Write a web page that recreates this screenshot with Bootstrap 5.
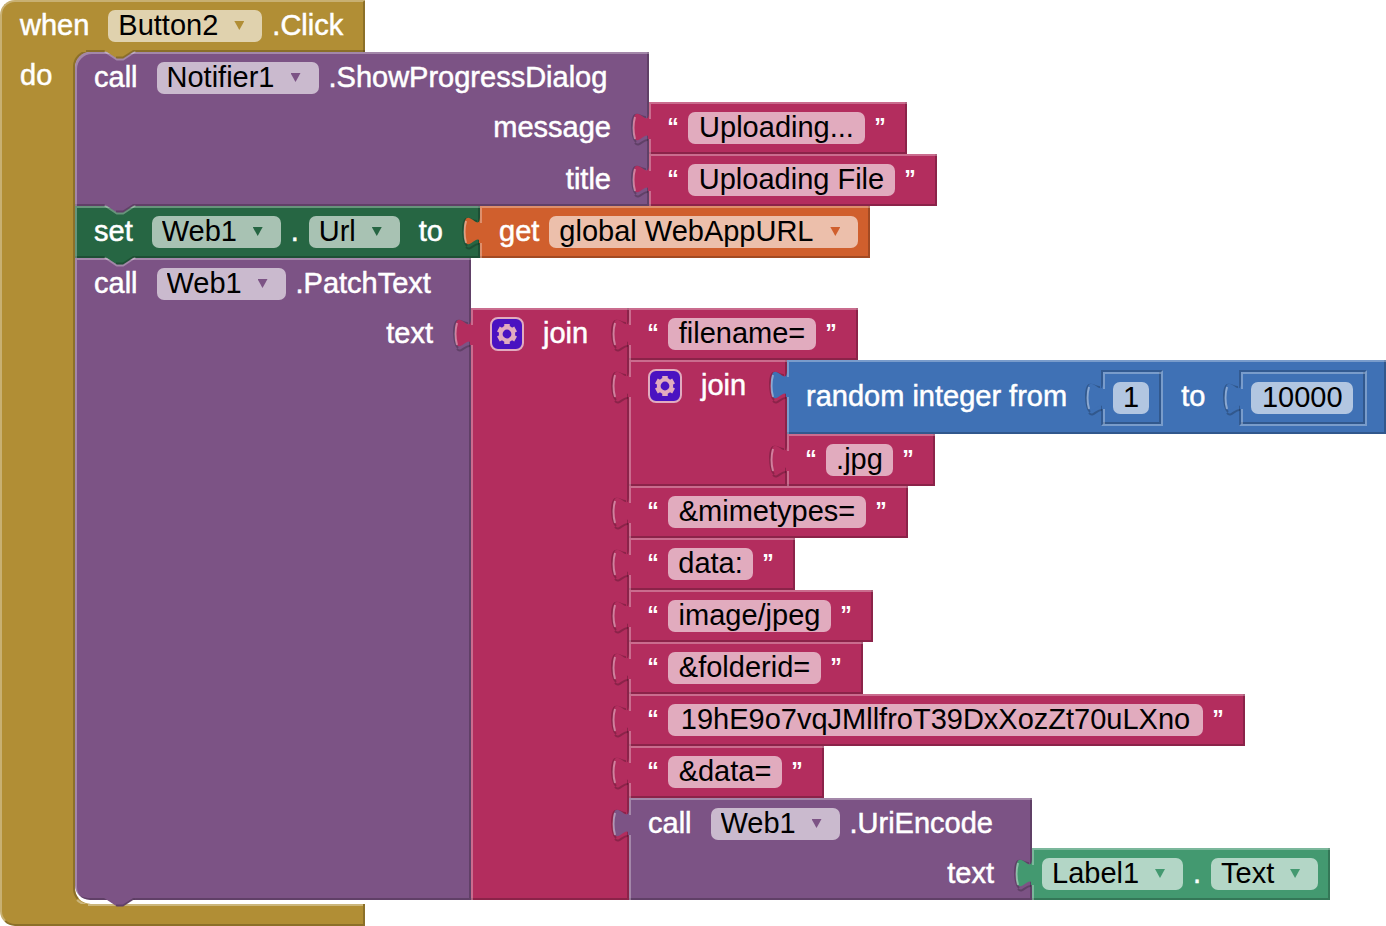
<!DOCTYPE html>
<html lang="en">
<head>
<meta charset="utf-8">
<meta name="viewport" content="width=device-width, initial-scale=1">
<title>Button2.Click blocks</title>
<link href="https://cdn.jsdelivr.net/npm/bootstrap@5.3.0/dist/css/bootstrap.min.css" rel="stylesheet">
<style>
:root { --lit: rgba(255,255,255,.3); --shade: rgba(0,0,0,.22); }
body { font-family: "Liberation Sans", Arial, sans-serif; font-size: 29px; line-height: 30px; color: #fff; background: #fff; white-space: nowrap; }

/* block colours */
.c-control { --c: #b18e35; }
.c-call { --c: #7c5385; }
.c-text { --c: #b32d5e; }
.c-set { --c: #266643; }
.c-var { --c: #d05f2d; }
.c-math { --c: #3f71b5; }
.c-get { --c: #439970; }

.blk { position: relative; background: var(--c); box-shadow: inset 2px 2px var(--lit), inset -2px -2px var(--shade); flex: none; }
.line { display: flex; align-items: flex-start; height: 52px; padding: 10px 20px 0 19px; }
.line-first { height: 50px; }
.line-end { justify-content: flex-end; padding-right: 38px; }
.g1 { gap: 10px; }
.far { margin-right: 9px; }
.far-left { margin-left: 9px; }
.caption { -webkit-text-stroke: 0.5px #fff; height: 32px; }

/* fields */
.field { border: 0; border-radius: 7px; background: rgba(255,255,255,.6); color: #000; height: 32px; padding: 0 0 2px; font: inherit; line-height: 30px; text-align: center; min-width: 0; }
.pick { position: relative; display: block; height: 32px; border-radius: 7px; background: rgba(255,255,255,.6); }
.pick select { appearance: none; display: block; border: 0; background: none; color: #000; font: inherit; line-height: 34px; height: 34px; margin-top: -2px; padding: 0 44px 0 10px; }
.pick::after { content: ""; position: absolute; right: 18px; top: 11px; width: 10px; height: 9px; background: var(--c); clip-path: polygon(0 0, 100% 0, 50% 100%); pointer-events: none; }
.snug select { padding-right: 43px; }
.quo { font-size: 23px; font-weight: 700; width: 10px; display: flex; justify-content: center; }
.quoted { width: fit-content; padding-right: 22px; }
.gear { border: 0; padding: 0; background: none; width: 34px; height: 34px; margin-top: -1px; display: block; }
.gear svg, .tab, .notch { display: block; }

/* connectors that overlap the neighbouring block */
.tab { position: absolute; left: -18px; top: 0; }
.notch { position: absolute; left: 28px; bottom: -10px; z-index: 2; }
.hat .notch { left: 101px; }

/* event block */
.hat { width: 365px; height: 52px; background: var(--c); border: 2px solid #c8b072; border-bottom: 0; border-right-color: #8c7029; border-radius: 15px 0 0 0; padding: 8px 18px 0; display: flex; position: relative; }
.hat::after { content: ""; position: absolute; left: 84px; right: -2px; bottom: 0; height: 2px; background: var(--shade); }
.rail { width: 75px; background: var(--c); border-left: 2px solid #c8b072; border-right: 2px solid #8c7029; padding: 8px 18px 0; flex: none; }
.foot { width: 365px; height: 22px; background: var(--c); border: 2px solid #c8b072; border-top: 0; border-right-color: #8c7029; border-bottom-color: #8c7029; border-radius: 0 0 0 15px; position: relative; }
.foot::after { content: ""; position: absolute; left: 86px; right: 0; top: 0; height: 2px; background: #cbb67c; }
.stack { position: relative; padding-bottom: 4px; }
.nook { position: absolute; left: -2px; }
.nook-top { top: 0; }
.nook-bottom { bottom: 0; }
.round-top { border-radius: 15px 0 0 0; }
.round-bottom { border-radius: 0 0 0 15px; }

.w-notify { min-width: 574px; }
.w-set { min-width: 405px; }
.w-patch { min-width: 396px; }
.w-join { min-width: 158px; }
.w-uri { min-width: 403px; }
.drop { margin-top: 50px; }
.math { display: flex; height: 74px; padding: 10px 19px 0; }
.math > .caption { margin-top: 11px; }
.socket { border: 2px solid; border-color: #325a91 #799cca #799cca #325a91; margin: 0 18px 0 34px; height: 56px; }
.socket:last-child { margin-right: 0; }
.socket .line { padding: 10px 12px 0 10px; }
.getter { padding: 10px 12px 0 10px; }

#message { width: 177px; } #title { width: 207px; } #part1 { width: 148px; } #ext { width: 67px; }
#part3 { width: 198px; } #part4 { width: 85px; } #part5 { width: 163px; } #part6 { width: 153px; }
#part7 { width: 535px; } #part8 { width: 114px; } #low { width: 36px; } #high { width: 102px; }
#var { width: 309px; }
</style>
</head>
<body>
<svg width="0" height="0" class="position-absolute" aria-hidden="true">
  <symbol id="s-tab" viewBox="0 0 20 46">
    <path d="M15 15c-5 1-13-10-14 8 0 10 1 14 4 17" fill="none" stroke="rgba(0,0,0,.22)" stroke-width="2"/>
    <path d="M18 10c0 20-16-16-16 15s16-5 16 15z" fill="var(--c)"/>
    <path d="M17 17h3v20h-3z" fill="var(--c)"/>
    <path d="M4 37q-3-11 0-22" fill="none" stroke="#fff" stroke-opacity=".4" stroke-width="2"/>
    <path d="M4 41c4 5 8-4 13-3" fill="none" stroke="#000" stroke-opacity=".22" stroke-width="2"/>
  </symbol>
  <symbol id="s-notch-fill" viewBox="0 0 34 12">
    <path d="M1 0L14 8.500h6L33 0z" fill="var(--c)"/>
    <path d="M13 7.500h7L32 0" fill="none" stroke="#000" stroke-opacity=".22" stroke-width="2"/>
  </symbol>
  <symbol id="s-notch" viewBox="0 0 34 12">
    <path d="M2 1L14 9h6L32 1" fill="none" stroke="#fff" stroke-opacity=".3" stroke-width="3"/>
    <use href="#s-notch-fill" width="34" height="12"/>
  </symbol>
  <symbol id="s-gear" viewBox="0 0 34 34">
    <rect x="1" y="1" width="32" height="32" rx="7" fill="#4a12c1" stroke="#e1abbf" stroke-width="2"/>
    <g fill="none" stroke="#e1abbf">
      <circle cx="17" cy="17" r="6.300" stroke-width="3.800"/>
      <path d="M17 10V7M17 24v3M23 13.500l2.600-1.500M11 20.500L8.400 22M11 13.500L8.400 12M23 20.500l2.600 1.500" stroke-width="5.500"/>
    </g>
  </symbol>
</svg>

<main class="c-control">
  <div class="hat g1">
    <span class="caption far">when</span>
    <label class="pick"><select aria-label="Component"><option>Button2</option></select></label>
    <span class="caption">.Click</span>
    <svg class="notch" width="34" height="12"><use href="#s-notch"/></svg>
  </div>
  <div class="d-flex">
    <div class="rail"><span class="caption">do</span></div>
    <div class="stack">
      <svg class="nook nook-top" width="18" height="16"><path d="M0 0H18A16 16 0 0 0 2 16H0z" fill="var(--c)"/><path d="M1 16A16 16 0 0 1 17 -1" fill="none" stroke="#8c7029" stroke-width="2"/></svg>
      <svg class="nook nook-bottom" width="18" height="18"><path d="M0 0H2A16 16 0 0 0 18 18H0z" fill="var(--c)"/><path d="M1 0v2A16 16 0 0 0 5 13" fill="none" stroke="#8c7029" stroke-width="2"/><path d="M4 14Q9 19 18 19" fill="none" stroke="#cbb67c" stroke-width="2"/></svg>

      <section class="d-flex">
        <div class="blk c-call w-notify round-top">
          <div class="line line-first g1">
            <span class="caption far">call</span>
            <label class="pick"><select aria-label="Notifier"><option>Notifier1</option></select></label>
            <span class="caption">.ShowProgressDialog</span>
          </div>
          <div class="line line-end"><label class="caption" for="message">message</label></div>
          <div class="line line-end"><label class="caption" for="title">title</label></div>
          <svg class="notch" width="34" height="12"><use href="#s-notch"/></svg>
        </div>
        <div class="drop">
          <div class="blk c-text line g1 quoted"><svg class="tab" width="20" height="46"><use href="#s-tab"/></svg><span class="quo">“</span><input class="field" id="message" value="Uploading..."><span class="quo">”</span></div>
          <div class="blk c-text line g1 quoted"><svg class="tab" width="20" height="46"><use href="#s-tab"/></svg><span class="quo">“</span><input class="field" id="title" value="Uploading File"><span class="quo">”</span></div>
        </div>
      </section>

      <section class="d-flex">
        <div class="blk c-set w-set line g1">
          <span class="caption far">set</span>
          <label class="pick snug"><select aria-label="Component"><option>Web1</option></select></label>
          <span class="caption">.</span>
          <label class="pick snug"><select aria-label="Property"><option>Url</option></select></label>
          <span class="caption far-left">to</span>
          <svg class="notch" width="34" height="12"><use href="#s-notch"/></svg>
        </div>
        <div class="blk c-var line g1 pe-2"><svg class="tab" width="20" height="46"><use href="#s-tab"/></svg>
          <label class="caption" for="var">get</label>
          <span class="pick me-1"><select id="var"><option>global WebAppURL</option></select></span>
        </div>
      </section>

      <section class="d-flex">
        <div class="blk c-call w-patch round-bottom">
          <div class="line line-first g1">
            <span class="caption far">call</span>
            <label class="pick snug"><select aria-label="Web component"><option>Web1</option></select></label>
            <span class="caption">.PatchText</span>
          </div>
          <div class="line line-end"><span class="caption">text</span></div>
          <svg class="notch" width="34" height="12"><use href="#s-notch-fill"/></svg>
        </div>
        <div class="drop d-flex">
          <div class="blk c-text w-join"><svg class="tab" width="20" height="46"><use href="#s-tab"/></svg>
            <div class="line g1"><button class="gear far" type="button" aria-label="Edit join"><svg width="34" height="34"><use href="#s-gear"/></svg></button><span class="caption">join</span></div>
          </div>
          <div>
            <div class="blk c-text line g1 quoted"><svg class="tab" width="20" height="46"><use href="#s-tab"/></svg><span class="quo">“</span><input class="field" id="part1" aria-label="Text" value="filename="><span class="quo">”</span></div>
            <div class="d-flex">
              <div class="blk c-text w-join"><svg class="tab" width="20" height="46"><use href="#s-tab"/></svg>
                <div class="line g1"><button class="gear far" type="button" aria-label="Edit join"><svg width="34" height="34"><use href="#s-gear"/></svg></button><span class="caption">join</span></div>
              </div>
              <div>
                <div class="blk c-math math"><svg class="tab" width="20" height="46"><use href="#s-tab"/></svg>
                  <label class="caption" for="low">random integer from</label>
                  <div class="socket"><div class="blk line"><svg class="tab" width="20" height="46"><use href="#s-tab"/></svg><input class="field" id="low" value="1"></div></div>
                  <label class="caption" for="high">to</label>
                  <div class="socket"><div class="blk line"><svg class="tab" width="20" height="46"><use href="#s-tab"/></svg><input class="field" id="high" value="10000"></div></div>
                </div>
                <div class="blk c-text line g1 quoted"><svg class="tab" width="20" height="46"><use href="#s-tab"/></svg><span class="quo">“</span><input class="field" id="ext" aria-label="Text" value=".jpg"><span class="quo">”</span></div>
              </div>
            </div>
            <div class="blk c-text line g1 quoted"><svg class="tab" width="20" height="46"><use href="#s-tab"/></svg><span class="quo">“</span><input class="field" id="part3" aria-label="Text" value="&amp;mimetypes="><span class="quo">”</span></div>
            <div class="blk c-text line g1 quoted"><svg class="tab" width="20" height="46"><use href="#s-tab"/></svg><span class="quo">“</span><input class="field" id="part4" aria-label="Text" value="data:"><span class="quo">”</span></div>
            <div class="blk c-text line g1 quoted"><svg class="tab" width="20" height="46"><use href="#s-tab"/></svg><span class="quo">“</span><input class="field" id="part5" aria-label="Text" value="image/jpeg"><span class="quo">”</span></div>
            <div class="blk c-text line g1 quoted"><svg class="tab" width="20" height="46"><use href="#s-tab"/></svg><span class="quo">“</span><input class="field" id="part6" aria-label="Text" value="&amp;folderid="><span class="quo">”</span></div>
            <div class="blk c-text line g1 quoted"><svg class="tab" width="20" height="46"><use href="#s-tab"/></svg><span class="quo">“</span><input class="field" id="part7" aria-label="Text" value="19hE9o7vqJMllfroT39DxXozZt70uLXno"><span class="quo">”</span></div>
            <div class="blk c-text line g1 quoted"><svg class="tab" width="20" height="46"><use href="#s-tab"/></svg><span class="quo">“</span><input class="field" id="part8" aria-label="Text" value="&amp;data="><span class="quo">”</span></div>
            <div class="d-flex">
              <div class="blk c-call w-uri"><svg class="tab" width="20" height="46"><use href="#s-tab"/></svg>
                <div class="line line-first g1">
                  <span class="caption far">call</span>
                  <label class="pick snug"><select aria-label="Web component"><option>Web1</option></select></label>
                  <span class="caption">.UriEncode</span>
                </div>
                <div class="line line-end"><span class="caption">text</span></div>
              </div>
              <div class="drop">
                <div class="blk c-get line g1 getter"><svg class="tab" width="20" height="46"><use href="#s-tab"/></svg>
                  <label class="pick snug"><select aria-label="Label component"><option>Label1</option></select></label>
                  <span class="caption">.</span>
                  <label class="pick snug"><select aria-label="Property"><option>Text</option></select></label>
                </div>
              </div>
            </div>
          </div>
        </div>
      </section>
    </div>
  </div>
  <div class="foot"></div>
</main>
<script src="https://cdn.jsdelivr.net/npm/bootstrap@5.3.0/dist/js/bootstrap.bundle.min.js"></script>
</body>
</html>
